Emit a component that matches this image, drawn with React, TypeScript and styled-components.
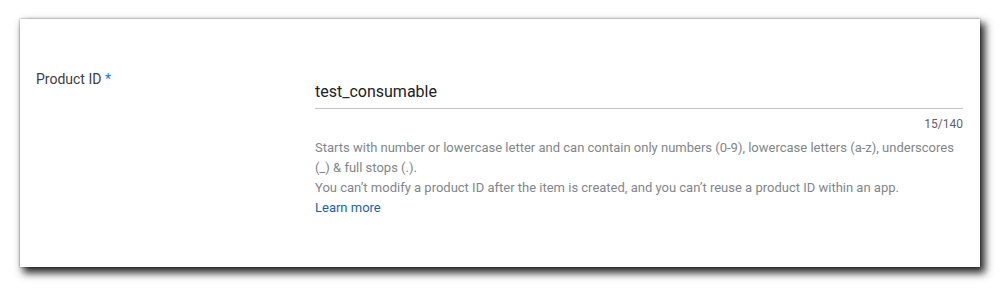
import React from 'react'
import styled, { createGlobalStyle } from 'styled-components'

const GlobalStyle = createGlobalStyle`
  html, body {
    margin: 0;
    padding: 0;
    background: #ffffff;
  }
  body {
    font-family: Roboto, 'Liberation Sans', Arial, sans-serif;
  }
`

const App = () => {
  return (
    <Page>
      <GlobalStyle />
      <Card>
        <Row>
          <Label>
            Product ID <Required>*</Required>
          </Label>
          <Field>
            <Input type='text' value='test_consumable' readOnly />
            <Counter>15/140</Counter>
            <Help>
              Starts with number or lowercase letter and can contain only numbers (0-9), lowercase
              letters (a-z), underscores (_) &amp; full stops (.).
              <br />
              You can’t modify a product ID after the item is created, and you can’t reuse a product
              ID within an app.
              <br />
              <LearnMore href='#'>Learn more</LearnMore>
            </Help>
          </Field>
        </Row>
      </Card>
    </Page>
  )
}

const Page = styled.div`
  padding: 19px 20px;
`

const Card = styled.div`
  width: 960px;
  height: 248px;
  box-sizing: border-box;
  background: #ffffff;
  box-shadow: 0 0 2px rgba(0, 0, 0, 0.45), 4px 5px 8px 1px rgba(0, 0, 0, 0.85);
`

const Row = styled.div`
  display: grid;
  grid-template-columns: 279px 1fr;
  padding: 48px 17px 0 16px;
`

const Label = styled.div`
  margin-top: 2px;
  font-size: 14px;
  line-height: 20px;
  color: #3c4043;
`

const Required = styled.span`
  color: #1a73e8;
`

const Field = styled.div`
  display: flex;
  flex-direction: column;
`

const Input = styled.input`
  box-sizing: border-box;
  width: 100%;
  height: 42px;
  padding: 8px 0 0;
  border: none;
  border-bottom: 1px solid #c4c4c4;
  outline: none;
  font-family: Roboto, 'Liberation Sans', Arial, sans-serif;
  font-size: 16px;
  color: #202124;
  background: transparent;
`

const Counter = styled.div`
  margin-top: 7px;
  text-align: right;
  font-size: 12px;
  line-height: 16px;
  color: #5f6368;
`

const Help = styled.div`
  margin-top: 6px;
  font-size: 13px;
  line-height: 20px;
  color: #80868b;
`

const LearnMore = styled.a`
  color: #1a5fa8;
  text-decoration: none;
`

export default App
